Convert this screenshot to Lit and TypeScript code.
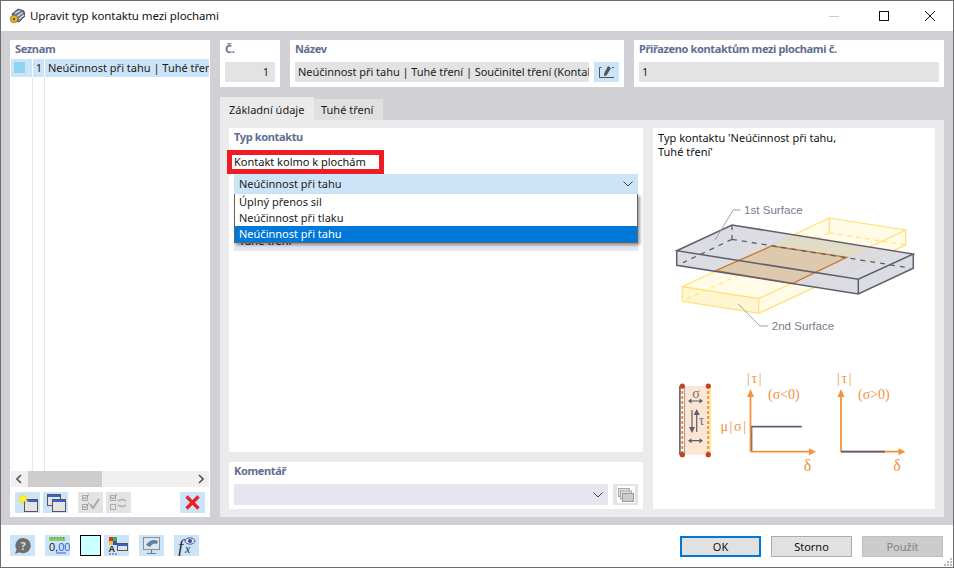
import { LitElement, html, css, svg } from 'lit';
import { customElement } from 'lit/decorators.js';

const menuItems = ['Úplný přenos sil', 'Neúčinnost při tlaku', 'Neúčinnost při tahu'];

const chevron = html`<svg class="chev" width="10" height="6" viewBox="0 0 10 6"><path d="M0.5 0.5 L5 5 L9.5 0.5" fill="none" stroke="#444" stroke-width="1"/></svg>`;

const winIcon = (x: number, y: number, w: number, h: number) => svg`
  <rect x=${x + 0.5} y=${y + 0.5} width=${w} height=${h} fill="#e4e4e4" stroke="#555"/>
  <rect x=${x + 1} y=${y + 1} width=${w - 1} height="2" fill="#3a62d8"/>`;

const icons = {
  star: html`<svg viewBox="0 0 25 21">
    ${winIcon(9, 7, 13, 12)}
    <path d="M8 1 L9.3 4.6 L13 3.6 L10.8 6.8 L13 10 L9.3 9.2 L7.5 12.5 L6.4 9.2 L2.5 9.6 L5 6.8 L3 3.4 L6.7 4.6 Z" fill="#fff02e" stroke="#e0d060" stroke-width=".5"/>
  </svg>`,
  copy: html`<svg viewBox="0 0 25 21">
    ${winIcon(4, 2, 13, 11)}
    ${winIcon(9, 7, 13, 12)}
  </svg>`,
  checks: html`<svg viewBox="0 0 25 21">
    <rect x="4.5" y="3.5" width="5" height="5" fill="none" stroke="#aaa"/>
    <rect x="4.5" y="12.5" width="5" height="5" fill="none" stroke="#aaa"/>
    <path d="M5 5 L7 7 L11 2 M5 14 L7 16 L11 11" fill="none" stroke="#999"/>
    <path d="M12 12 L15 16 L21 7" fill="none" stroke="#aaa" stroke-width="2"/>
  </svg>`,
  swap: html`<svg viewBox="0 0 25 21">
    <rect x="4.5" y="3.5" width="5" height="5" fill="none" stroke="#aaa"/>
    <rect x="4.5" y="12.5" width="5" height="5" fill="none" stroke="#aaa"/>
    <path d="M5 5 L7 7 L11 2" fill="none" stroke="#999"/>
    <path d="M12 9 Q16 6 20 9 M12 13 Q16 16 20 13" fill="none" stroke="#aaa" stroke-width="1.5"/>
  </svg>`,
  del: html`<svg viewBox="0 0 25 21"><path d="M6.5 4.5 L18.5 16.5 M18.5 4.5 L6.5 16.5" stroke="#ee1c25" stroke-width="3.2" fill="none"/></svg>`,
  help: html`<svg viewBox="0 0 25 21">
    <path d="M13 3 a7.6 7.6 0 1 1 -3.5 14.3 L5 19 L6.6 14.6 A7.6 7.6 0 0 1 13 3 Z" fill="#6e6e6e"/>
    <text x="13" y="15" class="help-q">?</text>
  </svg>`,
  num: html`<svg viewBox="0 0 25 21">
    <rect x="4" y="2" width="16" height="4" fill="#8ccb6a"/>
    <path d="M6.5 2v2M9.5 2v2M12.5 2v2M15.5 2v2M18.5 2v2" stroke="#5f9c48"/>
    <text x="4" y="16" class="num-t">0,<tspan class="num-u">00</tspan></text>
    <path d="M11.5 18 H21" stroke="#2f5fd8"/>
  </svg>`,
  abc: html`<svg viewBox="0 0 25 21">
    <rect x="5" y="2" width="4" height="4" fill="#e03030"/>
    <rect x="9" y="2" width="4" height="4" fill="#40b040"/>
    <rect x="5" y="6" width="4" height="4" fill="#e8c820"/>
    <rect x="9" y="6" width="4" height="4" fill="#3050d0"/>
    <text x="4.5" y="17" class="abc">A</text>
    <path d="M5 19h2M8 19h2M11 19h2" stroke="#555"/>
    ${winIcon(13, 8, 10, 7)}
  </svg>`,
  monitor: html`<svg viewBox="0 0 25 21">
    <rect x="4.5" y="2.5" width="16" height="12" fill="#dfe6ee" stroke="#8a8f96"/>
    <path d="M7 10 Q12 3 19 6 L18 9 Q14 7 11 12 Z" fill="#5c82a8"/>
    <path d="M12.5 15v3M8 18.5h9" stroke="#777" stroke-width="1.2"/>
  </svg>`,
  fx: html`<svg viewBox="0 0 25 21">
    <text x="4" y="18" class="fx">f</text>
    <text x="11" y="18" class="fx-x">x</text>
    <ellipse cx="16" cy="6" rx="5" ry="3.2" fill="#d8dcf0" stroke="#50609a"/>
    <circle cx="16" cy="6" r="2" fill="#3d4f9a"/>
  </svg>`,
};

@customElement('app-root')
export class AppRoot extends LitElement {
  static styles = css`
    :host {
      display: block;
      width: 954px;
      height: 568px;
      font-family: "Noto Sans", "Open Sans", sans-serif;
      font-size: 11px;
      color: #1c1c1c;
      background: #fff;
    }

    svg { display: block; }

    .window {
      box-sizing: border-box;
      width: 954px;
      height: 568px;
      display: flex;
      flex-direction: column;
      border: 1px solid #6e6e6e;
    }

    .titlebar {
      height: 30px;
      flex: none;
      display: flex;
      align-items: center;
      background: #fff;
    }
    .app-icon { margin-left: 8px; margin-right: 5px; }
    .title { font-size: 11.5px; letter-spacing: -0.09px; color: #111; flex: 1; padding-bottom: 1px; }
    .ctl { width: 46px; height: 30px; display: flex; align-items: center; justify-content: center; }
    .ctl.min { width: 54px; }

    .body {
      flex: none;
      box-sizing: border-box;
      height: 494px;
      padding: 9px 9px 8px;
      background: #d0d0d5;
      display: grid;
      grid-template-columns: 200px 724px;
      column-gap: 10px;
    }

    .head {
      font-weight: 700;
      letter-spacing: -0.36px;
      color: #5f6d93;
      line-height: 18px;
      height: 22px;
    }

    /* left list */
    .list-panel {
      background: #fff;
      display: flex;
      flex-direction: column;
      padding: 0 1px;
    }
    .list-panel .head { height: 19px; line-height: 18px; padding-left: 4px; }
    .row, .filler {
      display: grid;
      grid-template-columns: 22px 12px 1fr;
    }
    .row {
      height: 18px;
      background: #cce4f8;
      line-height: 18px;
      overflow: hidden;
    }
    .row > div { border-right: 1px solid #fff; }
    .row > div:last-child { border-right: none; padding-left: 3px; white-space: nowrap; overflow: hidden; }
    .filler { flex: 1; }
    .filler > div:not(:last-child) { border-right: 1px solid #e6e6e6; }
    .swatch { width: 11px; height: 11px; margin: 3px 0 0 3px; background: #8fd3f4; }
    .idx { text-align: right; padding-right: 2px; }

    .scroll {
      height: 16px;
      background: #f0f0f0;
      display: flex;
      align-items: center;
      justify-content: space-between;
      padding: 0 5px;
      position: relative;
    }
    .thumb {
      position: absolute;
      left: 17px;
      top: 0;
      width: 74px;
      height: 16px;
      background: #cdcdcd;
    }

    .tools {
      display: flex;
      height: 21px;
      margin: 5px 0 4px;
      padding-left: 4px;
    }
    .tool {
      width: 25px;
      height: 21px;
      flex: none;
      background: #cce4f8;
    }
    .tool.off { background: #e3e3e3; }
    .tools .tool + .tool { margin-left: 3px; }
    .tools .tool.sep { margin-left: 10px; }
    .tools .tool.end { margin-left: auto; margin-right: 4px; }

    /* top fields */
    .right { display: flex; flex-direction: column; min-width: 0; }
    .top {
      display: grid;
      grid-template-columns: 60px 334px 310px;
      column-gap: 10px;
      height: 47px;
    }
    .card {
      background: #fff;
      padding: 0 5px;
    }
    .field {
      height: 20px;
      line-height: 20px;
      background: #e3e3e3;
      padding: 0 3px;
      white-space: nowrap;
      overflow: hidden;
    }
    .field.num { text-align: right; padding-right: 6px; }
    .with-btn { display: flex; gap: 5px; }
    .with-btn .field { flex: 1; min-width: 0; letter-spacing: -0.05px; }
    .with-btn .tool { height: 20px; }

    /* tabs */
    .tabs { display: flex; align-items: flex-end; height: 23px; margin-top: 10px; }
    .tab {
      padding: 0 8px 0 9px;
      height: 23px;
      line-height: 26px;
      background: #ebebeb;
      width: 77px;
    }
    .tab.back {
      background: #e0e0e0;
      height: 21px;
      line-height: 22px;
      width: 53px;
      padding: 0 9px 0 7px;
    }

    .content {
      flex: 1;
      background: #ebebeb;
      padding: 8px 9px;
      display: grid;
      grid-template-columns: 414px 282px;
      column-gap: 10px;
      min-height: 0;
    }
    .col { display: flex; flex-direction: column; gap: 10px; min-height: 0; }
    .type {
      flex: 1;
      background: #fff;
      padding: 0 5px;
    }
    .marked {
      box-sizing: border-box;
      width: 157px;
      height: 24px;
      margin-left: -7px;
      border: 5px solid #ee1c25;
      background: #fff;
      padding-left: 2px;
      line-height: 14px;
      color: #111;
      white-space: nowrap;
    }
    .select {
      height: 20px;
      line-height: 20px;
      background: #cce4f8;
      padding: 0 5px;
      display: flex;
      align-items: center;
      justify-content: space-between;
    }
    .drop { position: relative; padding-top: 37px; }
    .under { background: #e6e6f0; }
    .menu {
      position: absolute;
      left: 0;
      right: 0;
      top: 0;
      background: #fff;
      border: 1px solid #646464;
      border-top: none;
      box-shadow: 2px 2px 3px rgba(0, 0, 0, 0.4);
    }
    .item { height: 16px; line-height: 16px; padding-left: 4px; }
    .item.on { background: #0078d7; color: #fff; }

    .comment {
      flex: none;
      height: 47px;
      background: #fff;
      padding: 0 5px;
    }
    .comment-row { display: flex; gap: 5px; }
    .comment .select { flex: 1; background: #e6e6f0; height: 21px; justify-content: flex-end; }
    .comment .tool { height: 21px; }

    .preview { background: #fff; display: flex; flex-direction: column; }
    .preview-title {
      height: 32px;
      padding: 3px 0 0 5px;
      box-sizing: border-box;
      line-height: 13.5px;
      color: #111;
    }
    .drawing { flex: 1; }

    .s-label { font: 11.6px "Liberation Sans", sans-serif; fill: #7b7b8c; }
    .o-label { font: 14px "Liberation Serif", serif; fill: #f0933c; }
    .o-wide { font: 14px "Liberation Serif", serif; fill: #f0933c; letter-spacing: 1.6px; }
    .o-big { font: 16px "Liberation Serif", serif; fill: #f0933c; }
    .g-label { font: 14px "Liberation Serif", serif; fill: #70707e; }

    .help-q { font: 700 11px "Noto Sans", sans-serif; fill: #ddd; text-anchor: middle; }
    .num-t { font: 11px "Liberation Sans", sans-serif; fill: #222; }
    .num-u { fill: #2f5fd8; }
    .abc { font: 700 9px "Liberation Sans", sans-serif; fill: #222; }
    .fx { font: italic 19px "Liberation Serif", serif; fill: #333; }
    .fx-x { font: italic 12px "Liberation Serif", serif; fill: #333; }

    /* footer */
    .foot {
      flex: 1;
      background: #fff;
      display: flex;
      align-items: flex-start;
      padding: 10px 0 0 9px;
      position: relative;
    }
    .foot .tool + .tool { margin-left: 10px; }
    .foot .tool.near { margin-left: 3px; }
    .color {
      box-sizing: border-box;
      width: 21px;
      height: 21px;
      margin-left: 10px;
      background: #ccffff;
      border: 1px solid #000;
    }
    .buttons { margin: 1px 10px 0 auto; display: flex; gap: 10px; }
    .btn {
      box-sizing: border-box;
      width: 81px;
      height: 21px;
      border: 1px solid #adadad;
      background: #e1e1e1;
      text-align: center;
      line-height: 19px;
      color: #111;
    }
    .btn.def { border: 2px solid #0078d7; line-height: 17px; }
    .btn.dis { background: #ccc; border-color: #bfbfbf; color: #838383; }
    .grip { position: absolute; right: 0; bottom: 0; }
  `;

  drawing() {
    return html`<svg class="drawing" width="282" height="349" viewBox="653 160 282 349">
      <!-- yellow plate -->
      <path d="M682.3 286.7 L829.3 218 L905.7 230 L905.7 245 L758.7 313.3 L682.3 301.3 Z" fill="#fffbe6"/>
      <path d="M682.3 286.7 L758.7 298.7 L758.7 313.3 L682.3 301.3 Z" fill="#fff6cf"/>
      <path d="M682.3 286.7 L829.3 218 L905.7 230 L758.7 298.7 Z M682.3 286.7 V301.3 L758.7 313.3 V298.7 M758.7 313.3 L905.7 245 V230 M829.3 218 V232.7"
        fill="none" stroke="#ffdf70" stroke-width="1.2"/>
      <path d="M829.3 232.7 L905.7 245 M829.3 232.7 L682.3 301.3" fill="none" stroke="#ffdf70" stroke-dasharray="5 4"/>

      <!-- grey plate -->
      <path d="M676.7 250.7 L732 225 L913.3 254 V268.3 L858.3 294 L676.7 265.3 Z" fill="#d6d6de" fill-opacity=".85"/>
      <path d="M771.7 246 L793.3 234.8 L869.4 247 L846.7 257.3 Z" fill="#e1dcc5"/>
      <path d="M792.7 283.3 L846.7 257.3 L877 243.5 L858.3 279.3 L858.3 285 L822 288 Z" fill="#e1dcc5" opacity="0"/>
      <path d="M771.7 246 L846.7 257.3 L792.7 283.3 L715.7 270.7 Z" fill="#dcc9ae"/>
      <path d="M771.7 246 L846.7 257.3 L792.7 283.3 L715.7 270.7 Z" fill="none" stroke="#c9782f" stroke-width="1.3"/>
      <path d="M732 225 V239.3 M732 239.3 L683 262.7 M732 239.3 L910 268" fill="none" stroke="#5e5e70" stroke-width="1.3" stroke-dasharray="5 5"/>
      <path d="M676.7 250.7 L732 225 L913.3 254 L858.3 279.3 Z M676.7 250.7 V265.3 L858.3 294 L913.3 268.3 V254 M858.3 279.3 V294"
        fill="none" stroke="#5e5e70" stroke-width="1.5"/>

      <path d="M740.7 210 H733.3 L715 240" fill="none" stroke="#a0a0a8"/>
      <path d="M768 326 H760 L738.3 304" fill="none" stroke="#a0a0a8"/>
      <text x="744" y="214" class="s-label">1st Surface</text>
      <text x="771.7" y="330" class="s-label">2nd Surface</text>

      <!-- schematic -->
      <rect x="682.3" y="386" width="26" height="68.7" fill="#fbe5d3"/>
      <path d="M680 386 V454.7" stroke="#5e5e70" stroke-width="1.8"/>
      <path d="M682.3 386 V454.7" stroke="#fff" stroke-width="3"/>
      <path d="M684.6 386 V454.7" stroke="#9a9aa8"/>
      <path d="M682.3 386 V454.7 M708.3 386 V454.7" stroke="#ef8a2e" stroke-width="2" stroke-dasharray="3 2"/>
      <path d="M710 386 V454.7" stroke="#ffe27a" stroke-width="1.6"/>
      <circle cx="682.3" cy="386" r="2.6" fill="#c8401c"/>
      <circle cx="708.3" cy="386" r="2.6" fill="#c8401c"/>
      <circle cx="682.3" cy="454.7" r="2.6" fill="#c8401c"/>
      <circle cx="708.3" cy="454.7" r="2.6" fill="#c8401c"/>
      <text x="696" y="398" text-anchor="middle" class="g-label">σ</text>
      <path d="M689 401 H702 M689 440.7 H702" stroke="#5e5e70" stroke-width="1.2"/>
      <path d="M688 401 l3.5 -2.5 v5 Z M703 401 l-3.5 -2.5 v5 Z M688 440.7 l3.5 -2.5 v5 Z M703 440.7 l-3.5 -2.5 v5 Z" fill="#5e5e70"/>
      <path d="M692 410 V429 M696.7 413 V432" stroke="#5e5e70" stroke-width="1.2"/>
      <path d="M692 433 l-3 -6 h6 Z M696.7 409 l-3 6 h6 Z" fill="#5e5e70"/>
      <text x="701.5" y="425" text-anchor="middle" class="g-label">τ</text>

      <!-- graphs -->
      <path d="M751.5 451.7 V426.7 H801.7" fill="none" stroke="#5e5e70" stroke-width="1.7"/>
      <path d="M750.5 451.7 V395 M750.5 451.7 H811" fill="none" stroke="#f0933c" stroke-width="1.8"/>
      <path d="M750.5 389 l-3.5 8 h7 Z M816 451.7 l-7 -3.5 v7 Z" fill="#f0933c"/>
      <text x="747" y="383" class="o-wide">|τ|</text>
      <text x="768" y="399" class="o-label">(σ&lt;0)</text>
      <text x="720.5" y="431" class="o-wide">μ|σ|</text>
      <text x="807.5" y="471" text-anchor="middle" class="o-big">δ</text>

      <path d="M841 451.7 V395 M841 451.7 H900" fill="none" stroke="#f0933c" stroke-width="1.8"/>
      <path d="M841 389 l-3.5 8 h7 Z M905.5 451.7 l-7 -3.5 v7 Z" fill="#f0933c"/>
      <path d="M841 451.7 H885" stroke="#5e5e70" stroke-width="1.8"/>
      <text x="837" y="383" class="o-wide">|τ|</text>
      <text x="858" y="399" class="o-label">(σ&gt;0)</text>
      <text x="897" y="471" text-anchor="middle" class="o-big">δ</text>
    </svg>`;
  }

  render() {
    return html`
      <div class="window">
        <div class="titlebar">
          <svg class="app-icon" width="16" height="16" viewBox="0 0 16 16">
            <path d="M3 6 L9 1 L15 3 L16 8 L10 14 L5 12 Z" fill="#6d7786" stroke="#333a44" stroke-width=".8"/>
            <path d="M6 5.5 L11 2.5 M8 8.5 L13.5 4.5 M10 11 L15 7" stroke="#e4e9ef" stroke-width="1.1"/>
            <circle cx="5" cy="11" r="3.8" fill="#e5b52c" stroke="#8a6a10" stroke-width=".7"/>
            <circle cx="5" cy="11" r="1.2" fill="#6a5210"/>
          </svg>
          <div class="title">Upravit typ kontaktu mezi plochami</div>
          <div class="ctl min"><svg width="10" height="1"><rect width="10" height="1" fill="#ccc"/></svg></div>
          <div class="ctl"><svg width="10" height="10"><rect x=".5" y=".5" width="9" height="9" fill="none" stroke="#111"/></svg></div>
          <div class="ctl"><svg width="10" height="10"><path d="M0 0 L10 10 M10 0 L0 10" stroke="#111"/></svg></div>
        </div>

        <div class="body">
          <div class="list-panel">
            <div class="head">Seznam</div>
            <div class="row">
              <div><div class="swatch"></div></div>
              <div class="idx">1</div>
              <div>Neúčinnost při tahu | Tuhé třen</div>
            </div>
            <div class="filler"><div></div><div></div><div></div></div>
            <div class="scroll">
              <div class="thumb"></div>
              <svg width="6" height="10" viewBox="0 0 6 10"><path d="M5 1 L1 5 L5 9" fill="none" stroke="#555" stroke-width="1.6"/></svg>
              <svg width="6" height="10" viewBox="0 0 6 10"><path d="M1 1 L5 5 L1 9" fill="none" stroke="#555" stroke-width="1.6"/></svg>
            </div>
            <div class="tools">
              <div class="tool">${icons.star}</div>
              <div class="tool">${icons.copy}</div>
              <div class="tool off sep">${icons.checks}</div>
              <div class="tool off">${icons.swap}</div>
              <div class="tool end">${icons.del}</div>
            </div>
          </div>

          <div class="right">
            <div class="top">
              <div class="card">
                <div class="head">Č.</div>
                <div class="field num">1</div>
              </div>
              <div class="card">
                <div class="head">Název</div>
                <div class="with-btn">
                  <div class="field">Neúčinnost při tahu | Tuhé tření | Součinitel tření (Kontal</div>
                  <div class="tool">
                    <svg viewBox="0 0 25 20">
                      <path d="M7.5 5.5 H5.5 V15.5 H7.5 M5.5 15.5 H20" fill="none" stroke="#555"/>
                      <path d="M14 4 L17 6 L12.5 13.5 L10 14 L10.3 11 Z" fill="#555"/>
                      <path d="M18 5.5 H20" stroke="#555"/>
                    </svg>
                  </div>
                </div>
              </div>
              <div class="card">
                <div class="head">Přiřazeno kontaktům mezi plochami č.</div>
                <div class="field">1</div>
              </div>
            </div>

            <div class="tabs">
              <div class="tab">Základní údaje</div>
              <div class="tab back">Tuhé tření</div>
            </div>

            <div class="content">
              <div class="col">
                <div class="type">
                  <div class="head">Typ kontaktu</div>
                  <div class="marked">Kontakt kolmo k plochám</div>
                  <div class="select"><span>Neúčinnost při tahu</span>${chevron}</div>
                  <div class="drop">
                    <div class="select under"><span>Tuhé tření</span></div>
                    <div class="menu">
                      ${menuItems.map((m, i) => html`<div class="item ${i === 2 ? 'on' : ''}">${m}</div>`)}
                    </div>
                  </div>
                </div>
                <div class="comment">
                  <div class="head">Komentář</div>
                  <div class="comment-row">
                    <div class="select">${chevron}</div>
                    <div class="tool off">
                      <svg viewBox="0 0 25 21">
                        <rect x="4" y="2" width="18" height="17" fill="#fff"/>
                        <rect x="5.5" y="4.5" width="11" height="8" fill="#ddd" stroke="#aaa"/>
                        <rect x="7.5" y="7" width="11" height="8" fill="#ddd" stroke="#aaa"/>
                        <rect x="9.5" y="9.5" width="11" height="8" fill="#ccc" stroke="#999"/>
                      </svg>
                    </div>
                  </div>
                </div>
              </div>
              <div class="preview">
                <div class="preview-title">Typ kontaktu 'Neúčinnost při tahu,<br />Tuhé tření'</div>
                ${this.drawing()}
              </div>
            </div>
          </div>
        </div>

        <div class="foot">
          <div class="tool">${icons.help}</div>
          <div class="tool">${icons.num}</div>
          <div class="color"></div>
          <div class="tool near">${icons.abc}</div>
          <div class="tool">${icons.monitor}</div>
          <div class="tool">${icons.fx}</div>
          <div class="buttons">
            <div class="btn def">OK</div>
            <div class="btn">Storno</div>
            <div class="btn dis">Použít</div>
          </div>
          <svg class="grip" width="9" height="9" viewBox="0 0 9 9">
            <path d="M6 0h2v2h-2z M3 3h2v2h-2z M6 3h2v2h-2z M0 6h2v2h-2z M3 6h2v2h-2z M6 6h2v2h-2z" fill="#bbb"/>
          </svg>
        </div>
      </div>
    `;
  }
}
